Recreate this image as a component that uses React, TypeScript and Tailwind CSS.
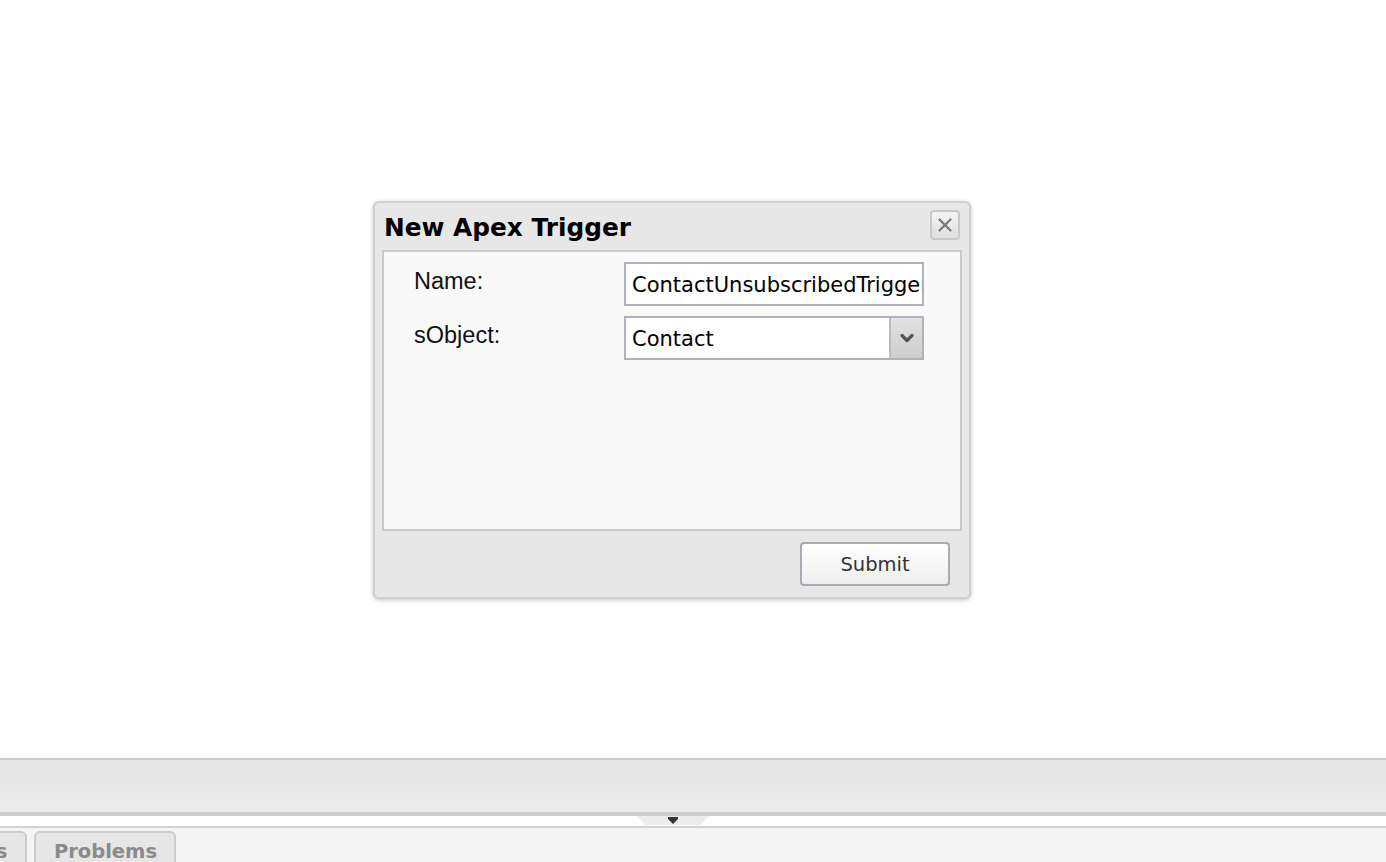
import { X, ChevronDown } from "lucide-react";

const fields = [
  { label: "Name:", value: "ContactUnsubscribedTrigger", select: false },
  { label: "sObject:", value: "Contact", select: true },
];

function Dialog() {
  return (
    <div className="flex h-[398px] w-[598px] flex-col rounded-[6px] border-2 border-[#d0d0d0] bg-[#e7e7e7] shadow-[0_1px_4px_rgba(0,0,0,0.25)]">
      <div className="flex h-[47px] items-start justify-between pl-[9px] pr-[9px]">
        <h2 className="mt-[8px] font-['DejaVu_Sans',sans-serif] text-[24.8px] font-bold leading-[34px] text-black">
          New Apex Trigger
        </h2>
        <button className="mt-[7px] flex h-[30px] w-[30px] items-center justify-center rounded-[4px] border-2 border-[#c8c8c8] bg-gradient-to-b from-[#f4f4f4] to-[#dedede]">
          <X className="h-[22px] w-[22px] text-[#7a7a7a]" strokeWidth={2.5} />
        </button>
      </div>
      <div className="mx-[7px] h-[281px] border-2 border-[#cacaca] bg-[#f9f9f9] pt-[10px]">
        <div className="flex flex-col gap-[10px]">
          {fields.map((f) => (
            <div key={f.label} className="flex items-start">
              <span className="w-[240px] shrink-0 pl-[30px] pt-[4px] font-['Liberation_Sans',sans-serif] text-[23.5px] leading-[30px] text-[#111]">
                {f.label}
              </span>
              <div className="flex h-[44px] w-[300px] overflow-hidden border-2 border-[#aeb2ba] bg-white">
                <div className="flex-1 overflow-hidden whitespace-nowrap pl-[6px] pt-[5px] font-['DejaVu_Sans',sans-serif] text-[21px] leading-[32px] text-black">
                  {f.value}
                </div>
                {f.select && (
                  <div className="flex w-[33px] items-center justify-center border-l-2 border-[#bcbcbc] bg-gradient-to-b from-[#e2e2e2] to-[#cdcdcd]">
                    <ChevronDown className="h-[20px] w-[20px] text-[#555]" strokeWidth={4} />
                  </div>
                )}
              </div>
            </div>
          ))}
        </div>
      </div>
      <div className="flex flex-1 items-center justify-end pr-[19px]">
        <button className="h-[44px] w-[150px] rounded-[4px] border-2 border-[#a9abb3] bg-gradient-to-b from-white to-[#eeeeee] pt-[1px] font-['DejaVu_Sans',sans-serif] text-[19.5px] text-[#333]">
          Submit
        </button>
      </div>
    </div>
  );
}

export default function App() {
  return (
    <div className="flex h-screen w-full flex-col overflow-hidden bg-white">
      <div className="h-[758px] shrink-0 pl-[373px] pt-[201px]">
        <Dialog />
      </div>
      <div className="h-[58px] shrink-0 border-t-2 border-b-[4px] border-[#cccccc] bg-gradient-to-b from-[#e4e4e4] to-[#ececec]" />
      <div className="relative h-[10px] shrink-0 bg-white">
        <div className="absolute left-[637px] top-0 flex h-[9px] w-[72px] justify-center bg-[#ececec] [clip-path:polygon(0_0,100%_0,88%_100%,12%_100%)]">
          <svg width="12" height="7" viewBox="0 0 12 7" className="mt-[1px]">
            <path d="M1 0h10v2L6 7 1 2z" fill="#333" />
          </svg>
        </div>
      </div>
      <div className="flex-1 border-t-2 border-[#d2d2d2] bg-[#f4f4f4]">
        <div className="flex gap-[7px] pt-[3px]">
          <div className="-ml-[69px] flex h-[40px] items-start rounded-t-[6px] border-2 border-[#cbcbcb] bg-[#e6e6e6] px-[18px] pt-[6px] font-['DejaVu_Sans',sans-serif] text-[19.5px] font-bold leading-[26px] text-[#8a8a8a]">
            Tests
          </div>
          <div className="flex h-[40px] w-[142px] items-start justify-center rounded-t-[6px] border-2 border-[#cbcbcb] bg-[#e6e6e6] pt-[6px] font-['DejaVu_Sans',sans-serif] text-[19.5px] font-bold leading-[26px] text-[#8a8a8a]">
            Problems
          </div>
        </div>
      </div>
    </div>
  );
}
